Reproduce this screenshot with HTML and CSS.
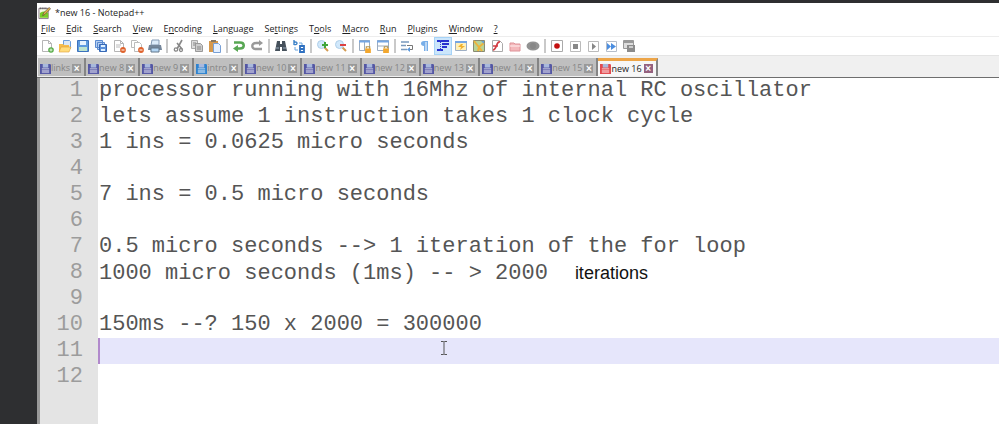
FILE: index.html
```html
<!DOCTYPE html>
<html lang="en">
<head>
<meta charset="utf-8">
<title>*new 16 - Notepad++</title>
<link rel="stylesheet" href="styles.css">
</head>
<body>
<svg class="defs" aria-hidden="true">
  <symbol id="disk" viewBox="0 0 12 12"><path d="M0 1h11l1 1v10H0z" fill="currentColor"/><path d="M3 1h6v4H3z" fill="#a9b9dc"/><path d="M2 7h8v4H2z" fill="#fff" opacity=".45"/><path d="M2 6h8" stroke="#fff" opacity=".5"/></symbol>
  <symbol id="page" viewBox="0 0 14 14"><path d="M2.500 1.500h6l3 3v8h-9z" fill="#fff" stroke="#b5b5b5"/><path d="M8.500 1.500v3h3" fill="none" stroke="#b5b5b5"/></symbol>
  <symbol id="lock" viewBox="0 0 7 7"><path d="M2 3V1.500h3V3" fill="none" stroke="#b5954c"/><path d="M1 3h5v4H1z" fill="#f2a72e"/></symbol>
</svg>
<main class="window">
  <header class="title">
    <svg class="app-icon" viewBox="0 0 14 14"><path d="M1 2h10v11H1z" fill="#f5f8e8" stroke="#878"/><path d="M2 7q5-3 9 0v5H2z" fill="#79cc29"/><path d="M2 2h8" stroke="#555" stroke-dasharray="1 1" stroke-width="2"/><path d="M5 10l1-3 6-6 1.500 1.500-6 6z" fill="#e5b34a" stroke="#514735" stroke-width=".7"/></svg>
    <h1>*new 16 - Notepad++</h1>
  </header>
  <nav class="menu" aria-label="Menu">
    <button><u>F</u>ile</button><button><u>E</u>dit</button><button><u>S</u>earch</button><button><u>V</u>iew</button><button>E<u>n</u>coding</button><button><u>L</u>anguage</button><button>Se<u>t</u>tings</button><button>T<u>o</u>ols</button><button><u>M</u>acro</button><button><u>R</u>un</button><button><u>P</u>lugins</button><button><u>W</u>indow</button><button><u>?</u></button>
  </nav>
  <div class="toolbar" role="toolbar" aria-label="Tools">
    <button aria-label="New"><svg viewBox="0 0 14 14"><use href="#page"/><circle cx="11" cy="11" r="2.800" fill="#57ab48"/><path d="M11 9.500v3M9.500 11h3" stroke="#dff5d8"/></svg></button>
    <button aria-label="Open"><svg viewBox="0 0 14 14"><path d="M5.500 1.500h6l1 1v7h-7z" fill="#d8e8fa" stroke="#6b9ddb"/><path d="M1 5h4l1 1h5v6H1z" fill="#f5bd4e"/><path d="M3 8h10l-2 5H1z" fill="#ffdc7c" stroke="#dd9f35" stroke-width=".6"/></svg></button>
    <button aria-label="Save"><svg viewBox="0 0 14 14"><path d="M1.500 1.500h11v11h-11z" fill="#5d9ade" stroke="#3c72bc"/><path d="M4 2h6v4H4z" fill="#e6f2ff"/><path d="M3 8h8v4H3z" fill="#bde3ce"/></svg></button>
    <button aria-label="Save all"><svg viewBox="0 0 14 14"><path d="M1.500 1.500h7v7h-7zM3.500 3.500h7v7h-7z" fill="#b7d0f2" stroke="#5b8bd0"/><path d="M5.500 5.500h7v7h-7z" fill="#5d91da" stroke="#3768b5"/><path d="M7 6h4v2H7zM7 10h4v2H7z" fill="#def0ff"/></svg></button>
    <button aria-label="Close"><svg viewBox="0 0 14 14"><use href="#page"/><path d="M4 6h5M4 8h4" stroke="#bbb"/><circle cx="11" cy="11" r="2.900" fill="#df622c"/><path d="M9.500 11h3" stroke="#fff"/></svg></button>
    <button aria-label="Close all"><svg viewBox="0 0 14 14"><path d="M1.500 1.500h5l2 2v5h-7z" fill="#fff" stroke="#bbb"/><path d="M4.500 3.500h5l2 2v7h-7z" fill="#fff" stroke="#bbb"/><circle cx="11" cy="11" r="2.900" fill="#df622c"/><path d="M9.500 11h3" stroke="#fff"/></svg></button>
    <button aria-label="Print"><svg viewBox="0 0 14 14"><path d="M4 1h7v5H3z" fill="#ddecfa" stroke="#859bb5"/><path d="M1 6h12l1 5H0z" fill="#74869a"/><path d="M3 9h8v4H3z" fill="#b4d6f4" stroke="#62768a"/></svg></button>
    <i></i>
    <button aria-label="Cut"><svg viewBox="0 0 14 14"><path d="M10 1L5 10M5 4l5 6" fill="none" stroke="#888" stroke-width="1.600"/><circle cx="4" cy="10.500" r="1.700" fill="none" stroke="#888" stroke-width="1.300"/><circle cx="9" cy="11" r="1.500" fill="none" stroke="#888" stroke-width="1.300"/></svg></button>
    <button aria-label="Copy"><svg viewBox="0 0 14 14"><path d="M1.500 1.500h6v8h-6z" fill="#ddd" stroke="#aaa"/><path d="M5.500 4.500h5l2 2v6h-7z" fill="#ccc" stroke="#999"/><path d="M3 4h3M3 6h2M7 8h4M7 10h4" stroke="#888"/></svg></button>
    <button aria-label="Paste"><svg viewBox="0 0 14 14"><path d="M1 2h9v11H1z" fill="#d6994c"/><path d="M3 1h5v2H3z" fill="#87765f"/><path d="M5.500 4.500h5l2 2v7h-7z" fill="#e5f0ff" stroke="#78a0d6"/></svg></button>
    <i></i>
    <button aria-label="Undo"><svg viewBox="0 0 14 14"><path d="M2 3.500h6c5 0 5 6 0 6H5" fill="none" stroke="#58a753" stroke-width="2.500"/><path d="M6 6v7L1 9.500z" fill="#58a753"/></svg></button>
    <button aria-label="Redo"><svg viewBox="0 0 14 14"><path d="M10 4H6c-5 0-5 6 0 6h6" fill="none" stroke="#999" stroke-width="2.300"/><path d="M9 1v6l4-3z" fill="#999"/></svg></button>
    <i></i>
    <button aria-label="Find"><svg viewBox="0 0 14 14"><path d="M3 2h3v3h2V2h3l2 10H8V8H6v4H1z" fill="#46515c"/><path d="M2 9h3M9 9h3" stroke="#9aacbd"/></svg></button>
    <button aria-label="Replace"><svg viewBox="0 0 14 14"><path d="M2 1v5M2 3.500c4-2 4 3 0 2" fill="none" stroke="#3d83c9" stroke-width="1.400"/><path d="M7 4h3v2M3 8v3h3" fill="none" stroke="#69a4dd"/><path d="M8 7h4v6H8zM8 10h4" fill="none" stroke="#2f71c1" stroke-width="1.800"/></svg></button>
    <i></i>
    <button aria-label="Zoom in"><svg viewBox="0 0 14 14"><path d="M8 8l4 4" stroke="#d39b52" stroke-width="2"/><circle cx="5.500" cy="5.500" r="4" fill="#d1e8fb" stroke="#afcfe9"/><path d="M9 3v6M6 6h6" stroke="#41a53b" stroke-width="2"/></svg></button>
    <button aria-label="Zoom out"><svg viewBox="0 0 14 14"><path d="M8 8l4 4" stroke="#d39b52" stroke-width="2"/><circle cx="5.500" cy="5.500" r="4" fill="#d1e8fb" stroke="#afcfe9"/><path d="M6 6h6" stroke="#dc4141" stroke-width="2"/></svg></button>
    <i></i>
    <button aria-label="Synchronise vertical scrolling"><svg viewBox="0 0 14 14"><path d="M1.500 1.500h10v10h-10zM6.500 2v9" fill="#fff" stroke="#9aabc0"/><path d="M1 2.500h11" stroke="#75a6e4" stroke-width="2"/><use href="#lock" x="6" y="6" width="8" height="8"/></svg></button>
    <button aria-label="Synchronise horizontal scrolling"><svg viewBox="0 0 14 14"><path d="M1.500 1.500h11v10h-11zM2 7h10" fill="#fff" stroke="#9aabc0"/><path d="M1 2.500h12" stroke="#75a6e4" stroke-width="2"/><use href="#lock" x="6" y="6" width="8" height="8"/></svg></button>
    <i></i>
    <button aria-label="Word wrap"><svg viewBox="0 0 14 14"><path d="M1 3h8M1 6.500h5M1 10.500h6" stroke="#7899bd" stroke-width="1.500"/><path d="M7 6.500h5.500v4H10" fill="none" stroke="#777"/><path d="M10 8v5l-3-2.500z" fill="#5b98dc"/></svg></button>
    <button aria-label="Show all characters"><svg viewBox="0 0 14 14"><path d="M10 2H6C2 2 2 7 6 7v5h1.500V3h1v9H10z" fill="#78aee8"/></svg></button>
    <button class="pressed" aria-label="Indent guide"><svg viewBox="0 0 14 14"><path d="M1 2h12M6 5h7M6 8h5M1 11h6" stroke="#2631cf" stroke-width="2"/><path d="M4.500 1v12" stroke="#3944cc" stroke-dasharray="1 1"/></svg></button>
    <button aria-label="Define language"><svg viewBox="0 0 14 14"><path d="M1.500 2.500h11v9h-11z" fill="#fff0b8" stroke="#9eafc5"/><path d="M1 3h12" stroke="#75a6e4" stroke-width="2"/><path d="M7 5L4 8h3l-1 3 5-4H8l1-2z" fill="#efb12f"/></svg></button>
    <button aria-label="Document map"><svg viewBox="0 0 14 14"><path d="M1.500 1.500h11v11h-11z" fill="#b8d498" stroke="#8a8a72"/><path d="M2 2l8 10M12 4l-5 4-1 4" fill="none" stroke="#eeb33c" stroke-width="2"/><path d="M9 2h3v3z" fill="#6da2cf"/></svg></button>
    <button aria-label="Function list"><svg viewBox="0 0 14 14"><path d="M2.500 1.500h7l3 3v8h-10z" fill="#fff" stroke="#aaa"/><path d="M10 3c-4-1-3 8-7 8M3 7h5" fill="none" stroke="#d23c43" stroke-width="1.700"/></svg></button>
    <button aria-label="Folder workspace"><svg viewBox="0 0 14 14"><path d="M2 4h4l1 1h5v7H2z" fill="#f4b8bb" stroke="#de9298"/><path d="M2 7h10" stroke="#fff0f0"/></svg></button>
    <button aria-label="Monitoring"><svg viewBox="0 0 14 14"><ellipse cx="7" cy="7" rx="6.500" ry="4.500" fill="#929292"/><circle cx="7" cy="7" r="3" fill="#878787"/></svg></button>
    <i></i>
    <button aria-label="Record"><svg viewBox="0 0 14 14"><path d="M1.500 1.500h11v11h-11z" fill="#fff" stroke="#aaa"/><circle cx="7" cy="7" r="2.800" fill="#c41111"/></svg></button>
    <button aria-label="Stop"><svg viewBox="0 0 14 14"><path d="M2.500 2.500h10v10h-10z" fill="#fff" stroke="#bbb"/><path d="M5 5h5v5H5z" fill="#888"/></svg></button>
    <button aria-label="Play"><svg viewBox="0 0 14 14"><path d="M2.500 2.500h10v10h-10z" fill="#fff" stroke="#bbb"/><path d="M6 4l4 3.500L6 11z" fill="#888"/></svg></button>
    <button aria-label="Play multiple times"><svg viewBox="0 0 14 14"><path d="M2.500 2.500h10v10h-10z" fill="#fff" stroke="#b5bdc9"/><path d="M3 4l4 3.500L3 11zM7 4l5 3.500L7 11z" fill="#4c8ee0"/></svg></button>
    <button aria-label="Save macro"><svg viewBox="0 0 14 14"><path d="M1.500 1.500h10v8h-10z" fill="#ddd" stroke="#999"/><path d="M1 3h11" stroke="#999" stroke-width="2"/><path d="M5 6h8v7H5z" fill="#8b8b8b"/><path d="M7 7h4v2H7z" fill="#ccc"/></svg></button>
  </div>
  <div class="tabs" role="tablist">
    <button role="tab"><svg class="disk"><use href="#disk"/></svg><span>links</span><b>×</b></button>
    <button role="tab"><svg class="disk"><use href="#disk"/></svg><span>new 8</span><b>×</b></button>
    <button role="tab"><svg class="disk"><use href="#disk"/></svg><span>new 9</span><b>×</b></button>
    <button role="tab"><svg class="disk saved"><use href="#disk"/></svg><span>intro</span><b>×</b></button>
    <button role="tab"><svg class="disk"><use href="#disk"/></svg><span>new 10</span><b>×</b></button>
    <button role="tab"><svg class="disk"><use href="#disk"/></svg><span>new 11</span><b>×</b></button>
    <button role="tab"><svg class="disk"><use href="#disk"/></svg><span>new 12</span><b>×</b></button>
    <button role="tab"><svg class="disk"><use href="#disk"/></svg><span>new 13</span><b>×</b></button>
    <button role="tab"><svg class="disk"><use href="#disk"/></svg><span>new 14</span><b>×</b></button>
    <button role="tab"><svg class="disk"><use href="#disk"/></svg><span>new 15</span><b>×</b></button>
    <button role="tab" aria-selected="true"><svg class="disk"><use href="#disk"/></svg><span>new 16</span><b>×</b></button>
  </div>
  <section class="editor" aria-label="Editor">
    <div class="line"><span class="num">1</span><code>processor running with 16Mhz of internal RC oscillator</code></div>
    <div class="line"><span class="num">2</span><code>lets assume 1 instruction takes 1 clock cycle</code></div>
    <div class="line"><span class="num">3</span><code>1 ins = 0.0625 micro seconds</code></div>
    <div class="line"><span class="num">4</span><code></code></div>
    <div class="line"><span class="num">5</span><code>7 ins = 0.5 micro seconds</code></div>
    <div class="line"><span class="num">6</span><code></code></div>
    <div class="line"><span class="num">7</span><code>0.5 micro seconds --&gt; 1 iteration of the for loop</code></div>
    <div class="line"><span class="num">8</span><code>1000 micro seconds (1ms) -- &gt; 2000<span class="note">iterations</span></code></div>
    <div class="line"><span class="num">9</span><code></code></div>
    <div class="line"><span class="num">10</span><code>150ms --? 150 x 2000 = 300000</code></div>
    <div class="line current"><span class="num">11</span><code><svg class="pointer" viewBox="0 0 8 14"><path d="M1 .5h2.500l.5.500.5-.5H7M1 13.500h2.500L4 13l.5.500H7M4 1v12" fill="none" stroke="#555"/></svg></code></div>
    <div class="line"><span class="num">12</span><code></code></div>
  </section>
</main>
</body>
</html>
```

FILE: styles.css
```css
* { box-sizing: border-box; }
body {
  margin: 0;
  min-height: 100vh;
  padding: 3px 0 0 37px;
  display: flex;
  background: #2e2f31;
  font: 9px/12px "Segoe UI", "Open Sans", sans-serif;
  color: #222;
  overflow: hidden;
}
.defs { position: absolute; width: 0; height: 0; }
button { border: 0; margin: 0; padding: 0; background: none; font: inherit; color: inherit; }
.window { flex: 1; min-width: 0; display: flex; flex-direction: column; background: #fff; }

.title { display: flex; align-items: center; gap: 4px; height: 19px; padding-left: 1px; }
.title h1 { margin: 0; font: inherit; }
.app-icon { width: 13px; height: 14px; }

.menu { display: flex; gap: 11px; height: 15px; padding-left: 4px; border-bottom: 1px solid #ededed; }
.menu u { text-underline-offset: 1px; }

.toolbar { display: flex; height: 19px; padding-left: 1px; border-bottom: 1px solid #e4e4e4; }
.toolbar button { width: 18px; height: 18px; display: grid; place-items: center; }
.toolbar svg { width: 14px; height: 14px; }
.toolbar i { width: 2px; height: 14px; margin: 2px; background: #c9c9c9; }
.toolbar .pressed { background: #cce6fb; outline: 1px solid #a6d3f7; outline-offset: -1px; }

.tabs {
  display: flex;
  height: 22px;
  padding: 2px 0 1px 1px;
  background: #f0f0f0;
  border-bottom: 1px solid #6e6e6e;
}
.tabs button {
  display: flex;
  align-items: center;
  padding: 2px 3px 0 2px;
  background: #bfbfbf;
  border-right: 2px solid #858585;
  color: #858585;
}
.tabs span { padding-right: 2px; }
.disk { width: 11px; height: 11px; color: #5457a4; }
.disk.saved { color: #2e83cf; }
.tabs b {
  width: 9px;
  height: 9px;
  background: #999;
  color: #fff;
  font: bold 10px/9px "Liberation Sans", sans-serif;
}
.tabs [aria-selected="true"] { background: #f7f7f7; border-top: 3px solid #eda548; padding-top: 0; color: #222; }
.tabs [aria-selected="true"] .disk { color: #e34b50; }
.tabs [aria-selected="true"] b { background: #94617f; }

.editor {
  flex: 1;
  border-left: 3px solid #999;
  background: linear-gradient(to right, #e4e4e4 58px, #fff 58px);
  font: 22px/26px "Courier New", "Liberation Mono", monospace;
}
.line { display: grid; grid-template-columns: 58px 1fr; height: 26px; }
.num { padding-right: 15px; text-align: right; color: #9c9c9c; }
.line code { padding-left: 1px; font: inherit; color: #555; white-space: pre; }
.note { margin-left: 27px; font: 18px/26px "Liberation Sans", sans-serif; color: #111; }
.current code { background: #e6e6fb; border-left: 2px solid #b189cc; }
.pointer { display: block; width: 8px; height: 14px; margin: 3px 0 0 339px; }
```
